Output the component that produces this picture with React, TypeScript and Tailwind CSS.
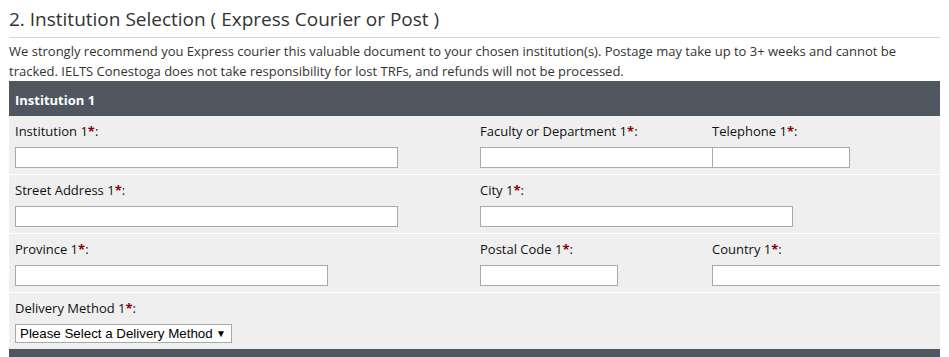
const font = { fontFamily: '"Open Sans", "Liberation Sans", sans-serif' };

function Label({ text }: { text: string }) {
    return (
        <div className="text-[13px] leading-[20px] text-[#111] mb-[6px] whitespace-nowrap">
            {text}
            <span className="text-[#8b0000] font-bold">*</span>:
        </div>
    );
}

function Field({ label, width }: { label: string; width: string }) {
    return (
        <div>
            <Label text={label} />
            <input
                type="text"
                className={`${width} h-[21px] block bg-white border border-[#a9a9a9] outline-none`}
            />
        </div>
    );
}

function Row({ children }: { children: React.ReactNode }) {
    return (
        <div className="grid grid-cols-[465px_232px_1fr] pl-[6px] pt-[5px] pb-[6px] border-b border-white">
            {children}
        </div>
    );
}

export default function App() {
    return (
        <div className="w-[949px] h-[357px] overflow-hidden bg-white px-[9px] text-[#333]" style={font}>
            <h2 className="pt-[6px] pb-[4px] text-[19px] leading-[27px] font-normal border-b border-[#d6d6d6]">
                2. Institution Selection ( Express Courier or Post )
            </h2>
            <p className="mt-[3px] text-[13px] leading-[20px] pr-[30px]">
                We strongly recommend you Express courier this valuable document to your chosen institution(s). Postage may take up to 3+ weeks and cannot be tracked. IELTS Conestoga does not take responsibility for lost TRFs, and refunds will not be processed.
            </p>

            <div className="bg-[#efefef] overflow-hidden">
                <div className="bg-[#4f565f] h-[35px] pt-[4px] flex items-center px-[6px] text-white text-[13px] font-bold">
                    Institution 1
                </div>

                <Row>
                    <Field label="Institution 1" width="w-[383px]" />
                    <Field label="Faculty or Department 1" width="w-[233px]" />
                    <Field label="Telephone 1" width="w-[138px]" />
                </Row>

                <Row>
                    <Field label="Street Address 1" width="w-[383px]" />
                    <Field label="City 1" width="w-[313px]" />
                    <div />
                </Row>

                <Row>
                    <Field label="Province 1" width="w-[313px]" />
                    <Field label="Postal Code 1" width="w-[138px]" />
                    <Field label="Country 1" width="w-[313px]" />
                </Row>

                <div className="pl-[6px] pt-[5px] pb-[6px]">
                    <Label text="Delivery Method 1" />
                    <div
                        className="w-[217px] h-[19px] flex items-center justify-between bg-white border border-[#a9a9a9] pl-[4px] pr-[5px] text-[13.33px] text-black"
                        style={{ fontFamily: '"Liberation Sans", Arial, sans-serif' }}
                    >
                        <span>Please Select a Delivery Method</span>
                        <span className="text-[10px]">▼</span>
                    </div>
                </div>

                <div className="bg-[#4f565f] h-[35px]" />
            </div>
        </div>
    );
}
